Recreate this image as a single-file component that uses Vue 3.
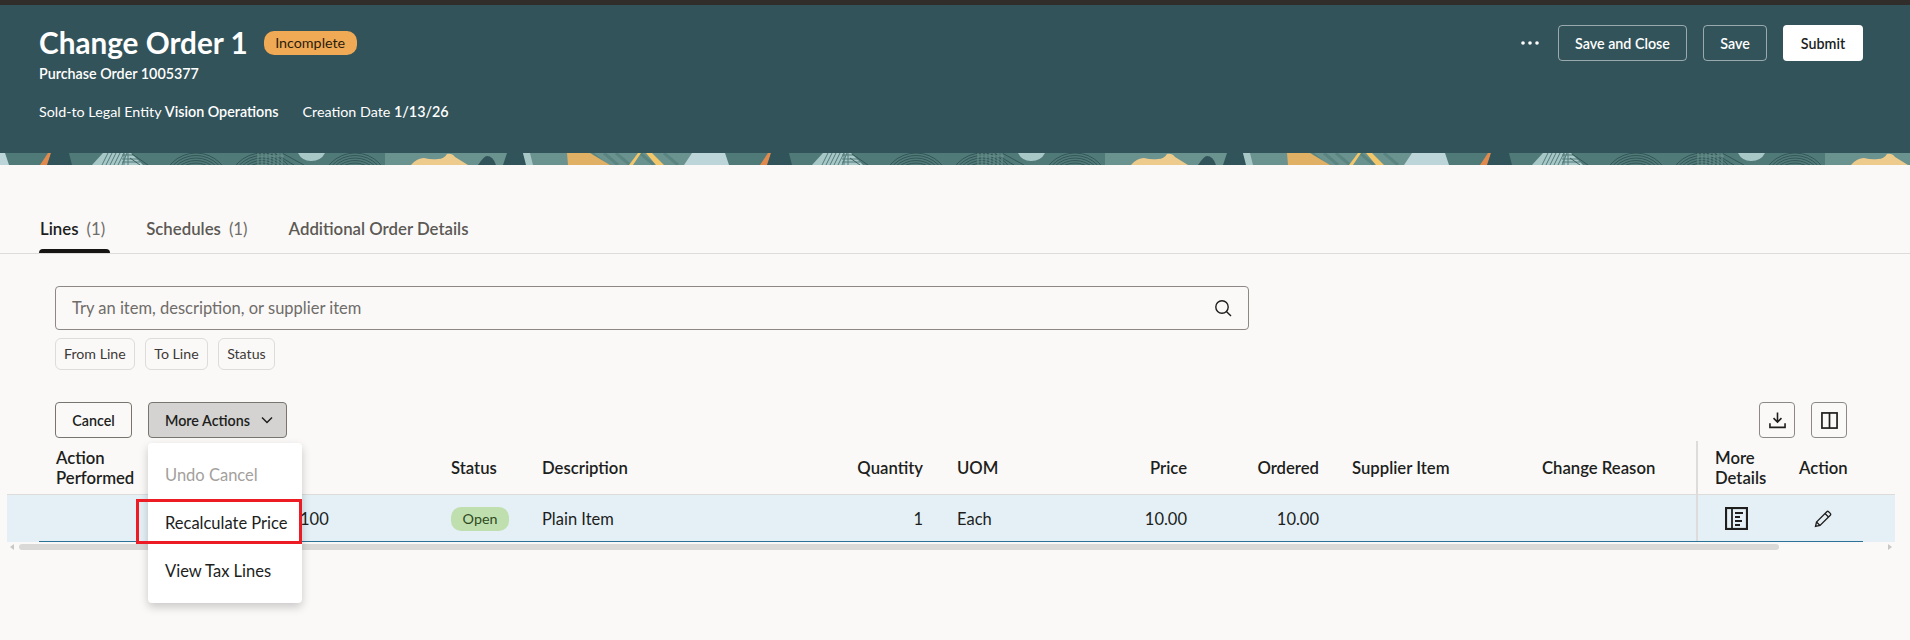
<template>
  <div class="page">
    <div class="top-strip"></div>

    <!-- page header -->
    <header class="banner">
      <div class="banner-left">
        <div class="title-row">
          <h1>Change Order 1</h1>
          <span class="badge-warn">Incomplete</span>
        </div>
        <div class="subtitle">Purchase Order 1005377</div>
        <div class="meta">
          <span>Sold-to Legal Entity <b>Vision Operations</b></span>
          <span>Creation Date <b>1/13/26</b></span>
        </div>
      </div>
      <div class="banner-actions">
        <svg class="dots" width="18" height="4" viewBox="0 0 18 4"><circle cx="2" cy="2" r="1.8"/><circle cx="9" cy="2" r="1.8"/><circle cx="16" cy="2" r="1.8"/></svg>
        <button class="btn-outline w-close">Save and Close</button>
        <button class="btn-outline w-save">Save</button>
        <button class="btn-white">Submit</button>
      </div>
    </header>

    <!-- decorative band, tile repeats every 720px -->
    <svg class="band" width="100%" height="12">
      <defs>
        <pattern id="bandTile" width="720" height="12" patternUnits="userSpaceOnUse">
          <rect width="720" height="12" fill="#507a78"/>
          <rect x="385" width="335" height="12" fill="#6a928e"/>
          <path d="M0 0h5l4 12H0z" fill="#bcd5d8"/>
          <path d="M48 0h3l-3 12h-8z" fill="#e08a4d"/>
          <path d="M51 0h18l3 12H47z" fill="#31545a"/>
          <path d="M103 0h28l12 12H92z" fill="#a8c8c8"/>
          <path d="M298 0h27q-4 8-14 8-9 0-13-8z" fill="#a8c8c8"/>
          <g fill="none" stroke="#507a78" stroke-width="1">
            <path d="M102 12l6-12M106 12l6-12M110 12l6-12M114 12l6-12M118 12l6-12M122 12l5-12"/>
            <path d="M122 2h12M122 6h16M122 9h18M124 0v12M128 0v12"/>
          </g>
          <g fill="none" stroke="#2b4a4e" stroke-width="0.8">
            <path d="M132 1l16 11M130 5l10 7M282 0l22 12M274 0l20 12"/>
            <template v-for="c in arcCentres" :key="c">
              <circle v-for="r in arcRadii" :key="r" :cx="c" cy="34" :r="r"/>
            </template>
          </g>
          <path d="M258 0v12M262 0v12M266 0v12M270 0v12M274 0v12M278 0v12M282 0v12M258 3h26" fill="none" stroke="#6a928e" stroke-width="1"/>
          <path d="M411 12q6-7 13-7 8 2 14 1 6 0 9-5 5-1 8 3l13 8z" fill="#eccb8d"/>
          <path d="M478 12q6-9 9-9 6 0 9 9z" fill="#31545a"/>
          <path d="M507 0h16l4 12h-24z" fill="#31545a"/>
          <path d="M523 0h7l3 12h-7z" fill="#a8c8c8"/>
          <g stroke="#5a8480" stroke-width="3">
            <path d="M592 0l14 12M604 0l14 12M616 0l14 12M640 0l14 12M664 0l14 12"/>
          </g>
          <path d="M567 0h23l20 12h-42z" fill="#e0b064"/>
          <path d="M638 0h3l-8 12h-4zM646 0h6l12 12h-8z" fill="#f2c76b"/>
          <path d="M692 0h28v12h-36z" fill="#bcd5d8"/>
        </pattern>
      </defs>
      <rect width="100%" height="12" fill="url(#bandTile)"/>
    </svg>

    <!-- tabs -->
    <nav class="tabs">
      <div v-for="t in tabs" :key="t.label" class="tab" :class="{ active: t.active }">
        {{ t.label }}<span v-if="t.count" class="count">({{ t.count }})</span>
      </div>
    </nav>

    <section class="content">
      <!-- smart search -->
      <div class="search">
        <span class="placeholder">Try an item, description, or supplier item</span>
        <svg width="18" height="18" viewBox="0 0 18 18" fill="none" stroke="#201e1c" stroke-width="1.4"><circle cx="8" cy="8" r="6.2"/><path d="M12.4 12.4l4.6 4.6"/></svg>
      </div>
      <div class="chips">
        <span class="chip">From Line</span>
        <span class="chip">To Line</span>
        <span class="chip">Status</span>
      </div>

      <!-- toolbar -->
      <div class="toolbar">
        <div class="toolbar-left">
          <button class="btn btn-cancel">Cancel</button>
          <div class="menu-wrap">
            <button class="btn btn-pressed">More Actions
              <svg width="12" height="8" viewBox="0 0 12 8" fill="none" stroke="#201e1c" stroke-width="1.5"><path d="M1 1.5l5 5 5-5"/></svg>
            </button>
            <div class="menu">
              <div class="menu-item disabled">Undo Cancel</div>
              <div class="menu-item marked">Recalculate Price</div>
              <div class="menu-item">View Tax Lines</div>
            </div>
          </div>
        </div>
        <div class="toolbar-right">
          <button class="icon-btn">
            <svg width="17" height="18" viewBox="0 0 18 18" fill="none" stroke="#201e1c" stroke-width="1.7"><path d="M9 1v10M4.800 7l4.200 4.200L13.200 7M1 12.500v4.300h16v-4.300"/></svg>
          </button>
          <button class="icon-btn">
            <svg width="17" height="17" viewBox="0 0 18 18" fill="none" stroke="#201e1c" stroke-width="1.8"><rect x="1" y="1" width="16" height="16"/><path d="M9 1v16"/></svg>
          </button>
        </div>
      </div>
    </section>

    <!-- lines table -->
    <div class="table">
      <div class="row head">
        <div class="c-action">Action<br>Performed</div>
        <div></div>
        <div>Status</div>
        <div>Description</div>
        <div class="num qty">Quantity</div>
        <div>UOM</div>
        <div class="num">Price</div>
        <div class="num">Ordered</div>
        <div>Supplier Item</div>
        <div>Change Reason</div>
        <div class="sep">More<br>Details</div>
        <div>Action</div>
      </div>
      <div class="row body">
        <div class="c-action"></div>
        <div>100</div>
        <div><span class="badge-open">Open</span></div>
        <div>Plain Item</div>
        <div class="num qty">1</div>
        <div>Each</div>
        <div class="num">10.00</div>
        <div class="num">10.00</div>
        <div></div>
        <div></div>
        <div class="sep">
          <svg class="ico-details" width="23" height="23" viewBox="0 0 23 23" fill="none" stroke="#201e1c" stroke-width="2.2"><rect x="1" y="1" width="21" height="21"/><path d="M7 1v21" stroke-width="1.8"/><path d="M10 6h8M10 10h5M10 14h7M10 18h5" stroke-width="1.8"/></svg>
        </div>
        <div>
          <svg class="ico-edit" width="18" height="18" viewBox="0 0 18 18" fill="none" stroke="#201e1c" stroke-width="1.3"><path d="M1.500 16.500l1-4.500L12.800 1.700a1.300 1.300 0 0 1 1.800 0l1.700 1.700a1.300 1.300 0 0 1 0 1.800L6 15.500z"/><path d="M11 3.500l3.500 3.500M2.500 12l3.500 3.500"/></svg>
        </div>
      </div>
      <div class="scrollbar">
        <span class="arrow left"></span>
        <span class="thumb"></span>
        <span class="arrow right"></span>
      </div>
    </div>
  </div>
</template>

<script setup>
const tabs = [
  { label: 'Lines', count: 1, active: true },
  { label: 'Schedules', count: 1 },
  { label: 'Additional Order Details' }
]

// fingerprint rings in the band
const arcCentres = [196, 262, 355]
const arcRadii = [14, 16.5, 19, 21.5, 24, 26.5, 29, 31.5, 34]
</script>

<style>
html, body {
  margin: 0;
  background: #fbf9f8;
}
</style>

<style scoped>
.page {
  width: 1910px;
  height: 640px;
  overflow: hidden;
  background: #fbf9f8;
  color: #201e1c;
  font-family: Lato, "Noto Sans", sans-serif;
  font-size: 16.5px;
}

.top-strip {
  height: 5px;
  background: #312d2a;
}

.banner {
  height: 148px;
  box-sizing: border-box;
  background: #33535a;
  color: #fff;
  padding: 20px 47px 0 39px;
  display: flex;
  justify-content: space-between;
  align-items: flex-start;
}

.title-row {
  display: flex;
  align-items: center;
  gap: 16px;
  height: 36px;
}

.title-row h1 {
  margin: 0;
  font-size: 29.7px;
  font-weight: 700;
  line-height: 36px;
}

.badge-warn {
  background: #f0a954;
  color: #2b1d0e;
  border-radius: 10px;
  width: 93px;
  height: 24px;
  line-height: 24px;
  text-align: center;
  font-size: 14.3px;
}

.subtitle {
  margin-top: 3px;
  font-size: 14.3px;
  font-weight: 600;
  line-height: 20px;
}

.meta {
  margin-top: 18px;
  display: flex;
  gap: 24px;
  font-size: 14.3px;
  line-height: 20px;
}

.meta b {
  font-weight: 600;
}

.banner-actions {
  display: flex;
  align-items: center;
  gap: 16px;
}

.dots {
  fill: #fff;
  margin-right: 3px;
}

.banner-actions button {
  height: 36px;
  border-radius: 4px;
  font: 600 14.3px Lato, "Noto Sans", sans-serif;
  padding: 0;
}

.btn-outline {
  background: transparent;
  color: #fff;
  border: 1px solid rgba(255, 255, 255, 0.5);
}

.w-close {
  width: 129px;
}

.w-save {
  width: 64px;
}

.btn-white {
  width: 80px;
  background: #fff;
  color: #201e1c;
  border: 0;
}

.band {
  display: block;
}

.tabs {
  height: 89px;
  box-sizing: border-box;
  padding: 52px 0 0 37px;
  border-bottom: 1px solid #dedcda;
  display: flex;
  gap: 35px;
  font-size: 16.8px;
  font-weight: 600;
  color: #5c5955;
}

.tab {
  height: 36px;
  line-height: 24px;
  padding: 0 3px;
  box-sizing: border-box;
}

.tab.active {
  color: #201e1c;
  position: relative;
}

.tab.active::after {
  content: "";
  position: absolute;
  left: 2px;
  right: -2px;
  bottom: 0;
  height: 4px;
  background: #161513;
  border-radius: 4px 4px 0 0;
}

.count {
  font-weight: 400;
  color: #6f6c69;
  margin-left: 8px;
}

.content {
  padding: 32px 0 0 55px;
  width: 1792px;
}

.search {
  width: 1194px;
  height: 44px;
  box-sizing: border-box;
  border: 1px solid #8b8885;
  border-radius: 4px;
  padding: 0 16px;
  display: flex;
  align-items: center;
  justify-content: space-between;
}

.placeholder {
  color: #6f6c69;
}

.chips {
  margin-top: 8px;
  display: flex;
  gap: 10.5px;
}

.chip {
  height: 32px;
  line-height: 30px;
  box-sizing: border-box;
  border: 1px solid #dedcda;
  border-radius: 6px;
  padding: 0 8px;
  font-size: 14.2px;
  color: #3d3a37;
}

.toolbar {
  margin-top: 32px;
  display: flex;
  justify-content: space-between;
  align-items: flex-start;
}

.toolbar-left,
.toolbar-right {
  display: flex;
  gap: 16px;
}

.btn {
  height: 36px;
  padding: 0 13px 0 16px;
  box-sizing: border-box;
  background: transparent;
  border: 1px solid #78746f;
  border-radius: 4px;
  font: 600 14.3px Lato, "Noto Sans", sans-serif;
  color: #201e1c;
  display: flex;
  align-items: center;
}

.btn-cancel {
  width: 77px;
  justify-content: center;
  padding: 0;
}

.btn-pressed {
  width: 139px;
  justify-content: space-between;
  background: #d5d3d1;
}

.menu-wrap {
  position: relative;
}

.menu {
  position: absolute;
  z-index: 5;
  top: 41px;
  left: 0;
  width: 154px;
  padding: 8px 0;
  box-sizing: border-box;
  background: #fff;
  border-radius: 4px;
  box-shadow: 0 4px 10px rgba(0, 0, 0, 0.2);
}

.menu-item {
  height: 48px;
  line-height: 48px;
  padding-left: 17px;
  white-space: nowrap;
  position: relative;
}

.menu-item.disabled {
  color: #a3a09d;
}

.menu-item.marked::after {
  content: "";
  position: absolute;
  left: -12px;
  top: 0;
  right: 0;
  height: 45px;
  box-sizing: border-box;
  border: 3.5px solid #ed1c24;
}

.icon-btn {
  width: 36px;
  height: 36px;
  padding: 0;
  background: transparent;
  border: 1px solid #8b8885;
  border-radius: 4px;
  display: flex;
  align-items: center;
  justify-content: center;
}

.table {
  margin: 3px 0 0 7px;
  width: 1888px;
}

.row {
  display: grid;
  grid-template-columns: 293px 151px 91px 258px 157px 143px 120px 132px 190px 154px 103px 96px;
  align-items: center;
}

.head {
  height: 53px;
  font-weight: 600;
  font-size: 16.7px;
  line-height: 20px;
}

.c-action {
  padding-left: 49px;
}

.num {
  text-align: right;
  padding-right: 33px;
}

.qty {
  padding-right: 34px;
}

.sep {
  align-self: stretch;
  border-left: 2px solid #dedcda;
  padding-left: 17px;
  display: flex;
  align-items: center;
}

.ico-details {
  margin-left: 10px;
}

.ico-edit {
  display: block;
  margin-left: 15px;
}

.body {
  height: 48px;
  background: #e4f0f6;
  border-top: 1px solid #dedcda;
  box-sizing: border-box;
  position: relative;
}

.body::after {
  content: "";
  position: absolute;
  left: 32px;
  right: 32px;
  bottom: 0;
  height: 1px;
  background: #2a7396;
}

.badge-open {
  display: inline-block;
  width: 58px;
  height: 24px;
  line-height: 24px;
  text-align: center;
  border-radius: 10px;
  background: #c0dfae;
  color: #2f4a22;
  font-size: 14.3px;
}

.scrollbar {
  height: 6px;
  margin-top: 2px;
  display: flex;
  align-items: center;
  gap: 5px;
}

.thumb {
  width: 1760px;
  height: 6px;
  border-radius: 3px;
  background: #dbd9d7;
}

.arrow {
  width: 0;
  height: 0;
  border-top: 3px solid transparent;
  border-bottom: 3px solid transparent;
}

.arrow.left {
  margin-left: 3px;
  border-right: 4px solid #c9c7c4;
}

.arrow.right {
  margin-left: 104px;
  border-left: 4px solid #c9c7c4;
}
</style>
